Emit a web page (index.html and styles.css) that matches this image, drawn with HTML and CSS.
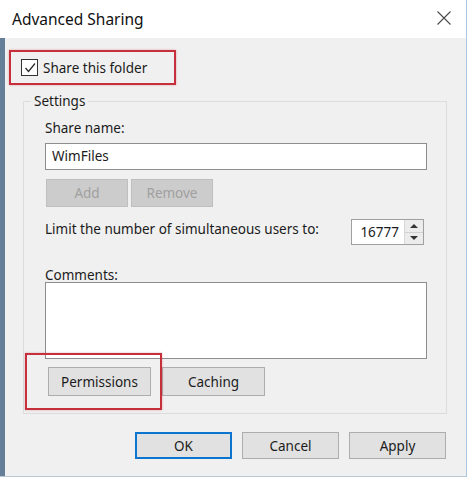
FILE: index.html
```html
<!DOCTYPE html>
<html lang="en">
<head>
  <meta charset="UTF-8">
  <title>Advanced Sharing</title>
  <link rel="stylesheet" href="styles.css">
</head>
<body>
  <div class="window">
    <div class="titlebar">
      <span class="title">Advanced Sharing</span>
      <svg class="close" width="14" height="14" viewBox="0 0 14 14">
        <path d="M0.5 0.5 L13.5 13.5 M13.5 0.5 L0.5 13.5" stroke="#4a4a4a" stroke-width="1.1" fill="none"/>
      </svg>
    </div>
    <div class="client">
      <div class="mark share-mark">
        <span class="checkbox">
          <svg width="14" height="14" viewBox="0 0 14 14">
            <path d="M2.5 7 L5.5 10.5 L12 2.5" stroke="#262626" stroke-width="1.2" fill="none"/>
          </svg>
        </span>
        <span>Share this folder</span>
      </div>
      <fieldset class="group">
        <legend>Settings</legend>
        <div class="group-body">
          <div class="label">Share name:</div>
          <div class="textbox">WimFiles</div>
          <div class="btn-row edit-row">
            <button class="btn disabled">Add</button>
            <button class="btn disabled">Remove</button>
          </div>
          <div class="limit-row">
            <span class="limit-label">Limit the number of simultaneous users to:</span>
            <div class="spin">
              <span class="spin-value">16777</span>
              <span class="spin-arrows">
                <span class="arrow up"></span>
                <span class="arrow down"></span>
              </span>
            </div>
          </div>
          <div class="label comments-label">Comments:</div>
          <div class="textarea"></div>
          <div class="btn-row perm-row">
            <div class="perm-wrap">
              <button class="btn perm-btn">Permissions</button>
              <span class="mark perm-mark"></span>
            </div>
            <button class="btn perm-btn">Caching</button>
          </div>
        </div>
      </fieldset>
      <div class="dialog-buttons">
        <button class="btn dlg-btn default">OK</button>
        <button class="btn dlg-btn">Cancel</button>
        <button class="btn dlg-btn">Apply</button>
      </div>
    </div>
  </div>
</body>
</html>
```

FILE: styles.css
```css
html, body {
  margin: 0; padding: 0;
  background: #fff;
  font-family: 'Noto Sans', 'Open Sans', sans-serif;
  font-size: 13px;
  color: #1b1b1b;
}
.window {
  width: 466px;
  height: 476px;
  border-right: 1px solid #a9c6e0;
  border-bottom: 1px solid #b9c9d8;
  display: flex;
  flex-direction: column;
}
.titlebar {
  height: 38px;
  flex-shrink: 0;
  display: flex;
  align-items: center;
  justify-content: space-between;
  padding: 0 15px 0 12px;
  background: #fff;
}
.title {
  font-size: 15.5px;
  color: #111;
}
.close { margin-top: -2px; }

.client {
  flex: 1;
  background: #f0f0f0;
  border-left: 5px solid #647f97;
  display: flex;
  flex-direction: column;
}
.mark {
  border: 2px solid #c5303c;
  box-shadow: 0 0 2px #c5303c66;
}
.share-mark {
  align-self: flex-start;
  display: flex;
  align-items: center;
  gap: 5px;
  width: 153px;
  height: 31px;
  margin: 12px 0 0 4px;
  padding-left: 10px;
  box-sizing: content-box;
  font-size: 13.5px;
}
.checkbox {
  width: 15px; height: 15px;
  border: 1px solid #333;
  background: #fff;
  display: flex; align-items: center; justify-content: center;
}

.group {
  margin: 7px 0 0 18px;
  width: 424px;
  box-sizing: border-box;
  padding: 0 0 0 7px;
  border: 1px solid #dcdcdc;
}
.group legend {
  padding: 0 3px;
  line-height: 18px;
  font-size: 13.5px;
}
.group-body {
  padding: 9px 19px 17px 14px;
}
.label {
  line-height: 18px;
  font-size: 13.5px;
}
.textbox {
  margin-top: 6px;
  height: 27px;
  box-sizing: border-box;
  border: 1px solid #8e8e8e;
  background: #fff;
  padding: 0 0 0 6px;
  line-height: 25px;
  font-size: 13.5px;
}
.btn-row {
  display: flex;
}
.btn {
  font-family: inherit;
  font-size: 13.5px;
  color: #1b1b1b;
  background: #e1e1e1;
  border: 1px solid #adadad;
  padding: 0;
  margin: 0;
  box-sizing: border-box;
}
.btn.disabled {
  background: #cccccc;
  border-color: #bfbfbf;
  color: #a0a0a0;
}
.edit-row {
  margin: 9px 0 0 1px;
  gap: 3px;
}
.edit-row .btn {
  width: 82px;
  height: 28px;
}
.limit-row {
  margin-top: 12px;
  display: flex;
  justify-content: space-between;
  align-items: flex-start;
}
.limit-label {
  line-height: 18px;
  margin-top: 1px;
  font-size: 13.5px;
}
.spin {
  margin-right: 3px;
  width: 73px;
  height: 26px;
  box-sizing: border-box;
  border: 1px solid #a0a0a0;
  background: #fff;
  display: flex;
}
.spin-value {
  flex: 1;
  text-align: right;
  padding-right: 5px;
  line-height: 24px;
  font-size: 13.5px;
}
.spin-arrows {
  width: 18px;
  background: #ececec;
  border-left: 1px solid #d8d8d8;
  display: flex;
  flex-direction: column;
}
.arrow {
  flex: 1;
  display: flex;
  align-items: center;
  justify-content: center;
}
.arrow.up { border-bottom: 1px solid #d0d0d0; }
.arrow::before {
  content: "";
  border-left: 4px solid transparent;
  border-right: 4px solid transparent;
}
.arrow.up::before { border-bottom: 4px solid #333; }
.arrow.down::before { border-top: 4px solid #333; }

.comments-label {
  margin-top: 23px;
  line-height: 14px;
}
.textarea {
  height: 77px;
  box-sizing: border-box;
  border: 1px solid #8e8e8e;
  background: #fff;
}
.perm-row {
  margin: 8px 0 0 3px;
  gap: 11px;
}
.perm-wrap {
  position: relative;
}
.perm-btn {
  width: 103px;
  height: 29px;
}
.perm-mark {
  position: absolute;
  left: -23px;
  top: -14px;
  width: 133px;
  height: 53px;
}

.dialog-buttons {
  display: flex;
  justify-content: flex-end;
  gap: 10px;
  margin-top: 18px;
  padding-right: 20px;
}
.dlg-btn {
  width: 97px;
  height: 27px;
}
.dlg-btn.default {
  border: 2px solid #0a74cf;
}
```
